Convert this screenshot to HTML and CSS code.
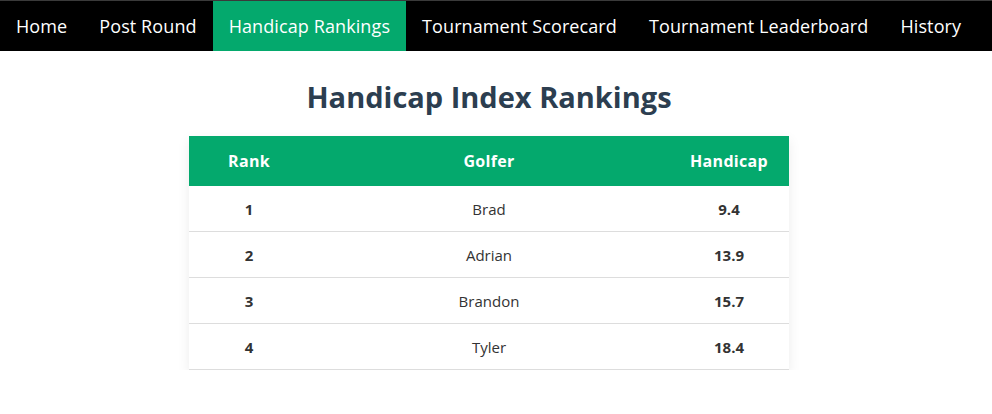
FILE: index.html
```html
<!DOCTYPE html>
<html lang="en">
<head>
    <meta charset="UTF-8">
    <title>Handicap Index Rankings</title>
    <link rel="stylesheet" href="styles.css">
</head>
<body>
    <nav class="navbar">
        <a href="#" class="nav-link">Home</a>
        <a href="#" class="nav-link">Post Round</a>
        <a href="#" class="nav-link active">Handicap Rankings</a>
        <a href="#" class="nav-link">Tournament Scorecard</a>
        <a href="#" class="nav-link">Tournament Leaderboard</a>
        <a href="#" class="nav-link">History</a>
    </nav>

    <main class="page">
        <h1 class="page-title">Handicap Index Rankings</h1>
        <table class="rankings">
            <thead>
                <tr>
                    <th class="col-rank">Rank</th>
                    <th class="col-golfer">Golfer</th>
                    <th class="col-hcp">Handicap</th>
                </tr>
            </thead>
            <tbody>
                <tr>
                    <td class="col-rank">1</td>
                    <td class="col-golfer">Brad</td>
                    <td class="col-hcp">9.4</td>
                </tr>
                <tr>
                    <td class="col-rank">2</td>
                    <td class="col-golfer">Adrian</td>
                    <td class="col-hcp">13.9</td>
                </tr>
                <tr>
                    <td class="col-rank">3</td>
                    <td class="col-golfer">Brandon</td>
                    <td class="col-hcp">15.7</td>
                </tr>
                <tr>
                    <td class="col-rank">4</td>
                    <td class="col-golfer">Tyler</td>
                    <td class="col-hcp">18.4</td>
                </tr>
            </tbody>
        </table>
    </main>
</body>
</html>
```

FILE: styles.css
```css
body {
    margin: 0;
    background: #fff;
    font-family: "Open Sans", "Liberation Sans", sans-serif;
    color: #333;
}

.navbar {
    display: flex;
    height: 50px;
    background: #000;
    border-top: 1px solid #3a3a3a;
}

.nav-link {
    display: flex;
    align-items: center;
    padding: 0 16px 1px;
    color: #fff;
    text-decoration: none;
    font-size: 18px;
    letter-spacing: 0.1px;
}

.nav-link.active {
    background: #04a96d;
}

.page {
    padding: 0 14px 0 0;
}

.page-title {
    margin: 27px 0 20px;
    text-align: center;
    font-size: 29px;
    font-weight: 700;
    color: #2c3e50;
    line-height: 38px;
}

.rankings {
    width: 600px;
    margin: 0 auto;
    border-collapse: collapse;
    box-shadow: 0 4px 12px rgba(0, 0, 0, 0.08);
}

.rankings th {
    height: 50px;
    padding: 0;
    background: #04a96d;
    color: #fff;
    font-size: 16px;
    font-weight: 700;
    letter-spacing: 0.3px;
}

.rankings td {
    height: 45px;
    padding: 0;
    text-align: center;
    font-size: 15px;
    border-bottom: 1px solid #ddd;
}

.col-rank,
.col-hcp {
    width: 20%;
}

td.col-rank,
td.col-hcp {
    font-weight: 700;
}
```
